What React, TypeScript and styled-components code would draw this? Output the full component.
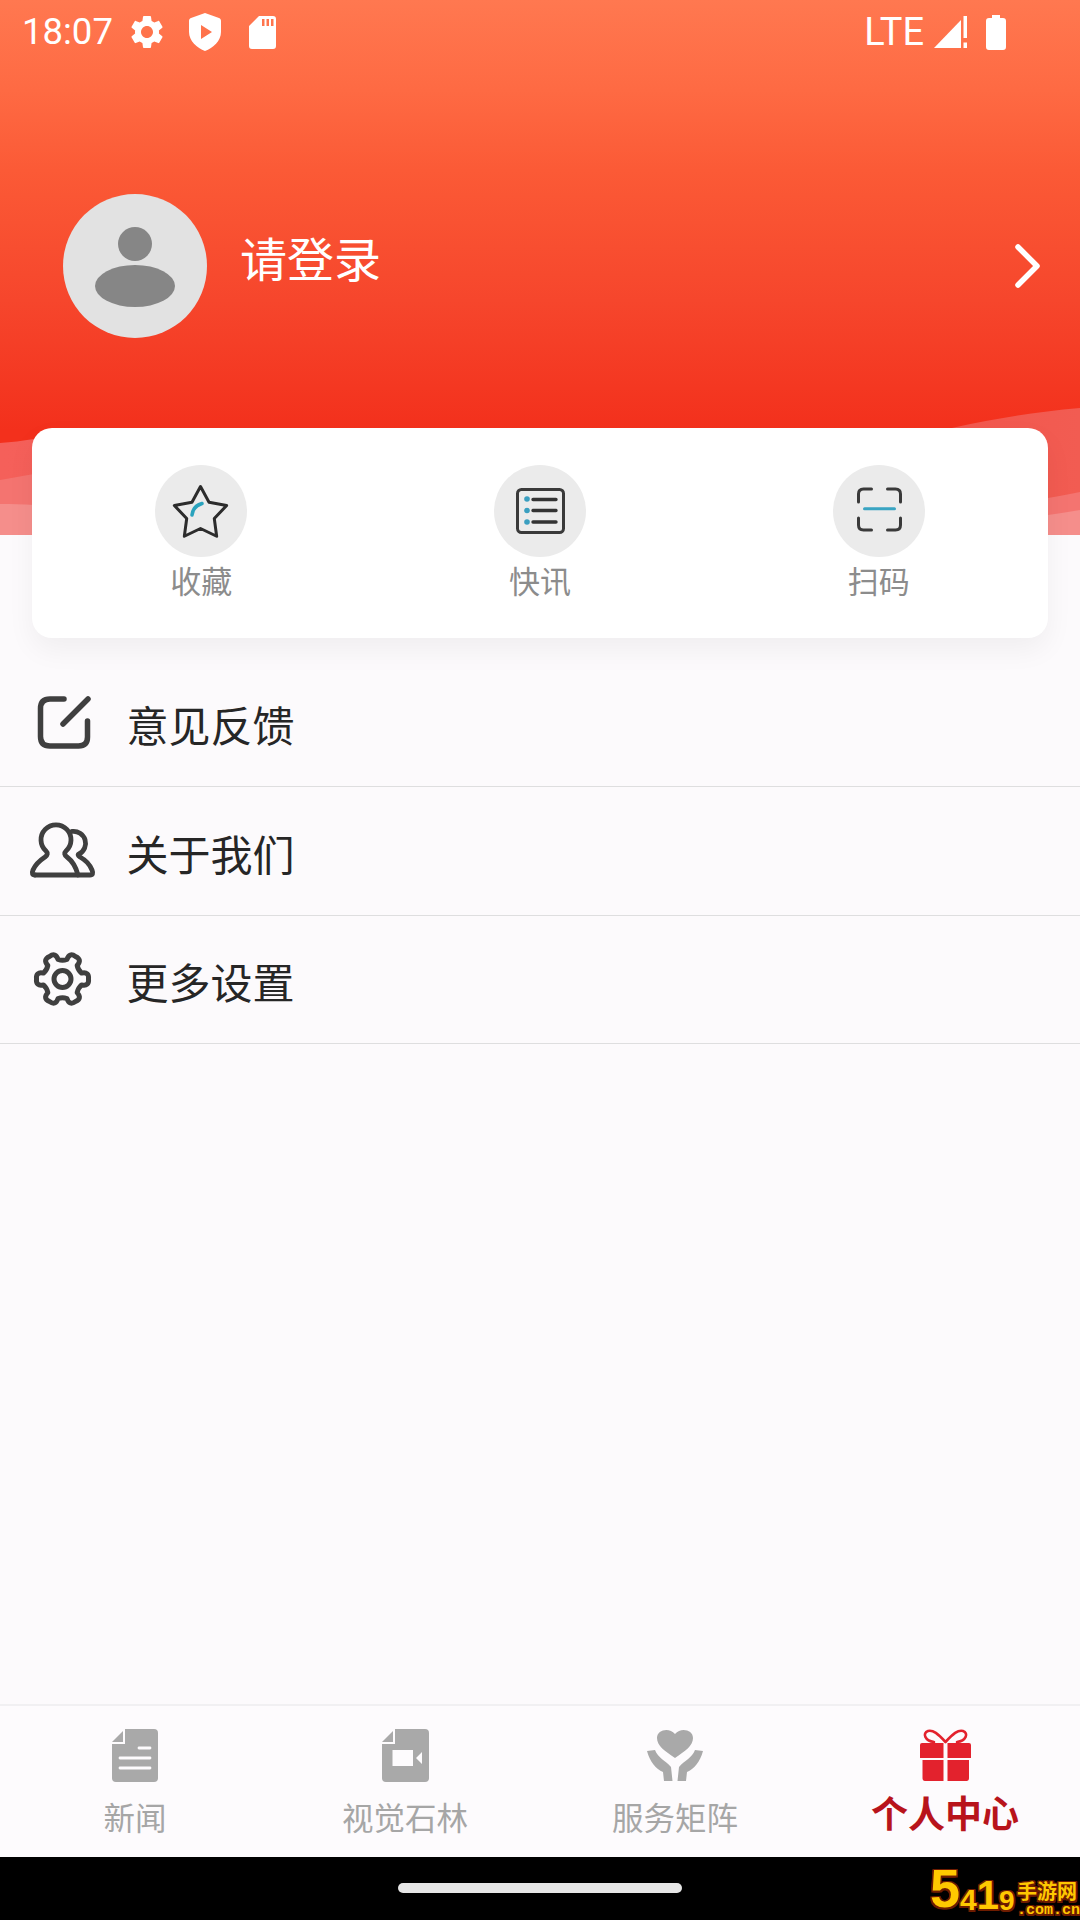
import React from "react";
import styled, { createGlobalStyle } from "styled-components";

const CJK = `"Noto Sans CJK SC", "Noto Sans", sans-serif`;

const Global = createGlobalStyle`
  html, body { margin: 0; padding: 0; background: #000; }
  * { box-sizing: border-box; }
`;

const Page = styled.div`
  position: relative;
  width: 1080px;
  height: 1920px;
  display: flex;
  flex-direction: column;
  background: #fcfafc;
  overflow: hidden;
  font-family: ${CJK};
`;

const Header = styled.header`
  position: relative;
  height: 535px;
  flex: none;
  background: linear-gradient(180deg, #ff7850 0, #fe6a43 90px, #fb5a36 170px, #f6462c 300px, #f3301c 430px);
`;

const WaveArt = styled.svg`
  position: absolute;
  left: 0;
  top: 400px;
  width: 1080px;
  height: 135px;
`;

const StatusBar = styled.div`
  position: relative;
  height: 54px;
  display: flex;
  align-items: center;
  padding: 10px 74px 0 22px;
  color: #fff;
  font-family: Roboto, sans-serif;
  font-size: 36.5px;
`;

const StatusTime = styled.span`
  line-height: 1;
  margin-right: 14.5px;
`;

const StatusIcon = styled.svg<{ $gap?: number }>`
  flex: none;
  display: block;
  margin-right: ${(p) => p.$gap ?? 0}px;
`;

const StatusSpacer = styled.div`
  flex: 1;
`;

const StatusLte = styled.span`
  line-height: 1;
  font-size: 38px;
  margin-right: 10px;
`;

const Profile = styled.div`
  position: relative;
  margin-top: 140px;
  display: flex;
  align-items: center;
  padding: 0 38px 0 63px;
`;

const Avatar = styled.svg`
  width: 144px;
  height: 144px;
  flex: none;
  display: block;
`;

const LoginText = styled.span`
  flex: 1;
  margin: -19px 0 0 33px;
  color: #fff;
  font-size: 47px;
  line-height: 60px;
`;

const Chevron = styled.svg`
  width: 28px;
  height: 46px;
  flex: none;
  display: block;
`;

const QuickCard = styled.section`
  position: relative;
  flex: none;
  height: 210px;
  margin: -107px 32px 0;
  display: grid;
  grid-template-columns: repeat(3, 1fr);
  background: #fff;
  border-radius: 20px;
  box-shadow: 0 12px 28px rgba(0, 0, 0, 0.05);
`;

const QuickItem = styled.div`
  display: flex;
  flex-direction: column;
  align-items: center;
  padding-top: 37px;
`;

const QuickDisc = styled.div`
  width: 92px;
  height: 92px;
  border-radius: 50%;
  background: #ebebeb;
  display: flex;
  align-items: center;
  justify-content: center;
`;

const QuickLabel = styled.span`
  margin-top: 3px;
  color: #8c8c8c;
  font-size: 31px;
  line-height: 40px;
`;

const Menu = styled.nav`
  flex: 1;
  margin-top: 21px;
`;

const MenuRow = styled.div`
  height: 128.4px;
  display: flex;
  align-items: center;
  border-bottom: 1.5px solid #dededf;
`;

const MenuIconSlot = styled.div`
  width: 126.5px;
  flex: none;
`;

const MenuIcon = styled.svg<{ $left: number }>`
  display: block;
  margin-left: ${(p) => p.$left}px;
`;

const MenuText = styled.span`
  margin-top: 3px;
  color: #262626;
  font-size: 42px;
  line-height: 56px;
`;

const TabBar = styled.nav`
  flex: none;
  height: 153px;
  display: grid;
  grid-template-columns: repeat(4, 1fr);
  background: #fdfbfd;
  border-top: 2px solid #f1f0f2;
`;

const Tab = styled.div`
  display: flex;
  flex-direction: column;
  align-items: center;
  padding-top: 22px;
`;

const TabIcon = styled.svg`
  width: 60px;
  height: 56px;
  display: block;
  flex: none;
`;

const TabLabel = styled.span<{ $active?: boolean }>`
  margin-top: ${(p) => (p.$active ? 6 : 10)}px;
  color: ${(p) => (p.$active ? "#b8141b" : "#a6a6a6")};
  font-size: ${(p) => (p.$active ? 37 : 31.5)}px;
  font-weight: ${(p) => (p.$active ? 700 : 400)};
  line-height: 44px;
  white-space: nowrap;
`;

const NavBar = styled.div`
  flex: none;
  height: 63px;
  background: #000;
  display: flex;
  justify-content: center;
  padding-top: 26px;
`;

const HomePill = styled.div`
  width: 284px;
  height: 10px;
  border-radius: 5px;
  background: #e6e6e6;
`;

const Watermark = styled.div`
  position: absolute;
  right: 0;
  bottom: 0;
  width: 150px;
  height: 55px;
  display: flex;
  align-items: flex-start;
  color: #ffc800;
  text-shadow: 1.5px 0 #6e1c00, -1.5px 0 #6e1c00, 0 1.5px #6e1c00, 0 -1.5px #6e1c00, 1.5px 1.5px #6e1c00,
    -1.5px -1.5px #6e1c00, 1.5px -1.5px #6e1c00, -1.5px 1.5px #6e1c00;
`;

const MarkDigits = styled.div`
  display: flex;
  align-items: flex-end;
  width: 87px;
  height: 50px;
  font-family: "Liberation Sans", sans-serif;
  font-weight: 700;
  line-height: 1;
`;

const MarkDigit = styled.span<{ $size: number }>`
  font-size: ${(p) => p.$size}px;
`;

const MarkWords = styled.div`
  display: flex;
  flex-direction: column;
  margin-top: 15px;
`;

const MarkName = styled.span`
  font-size: 20px;
  line-height: 22px;
  font-weight: 700;
  white-space: nowrap;
`;

const MarkDomain = styled.span`
  font-family: "Liberation Mono", monospace;
  font-size: 15px;
  line-height: 18px;
  font-weight: 700;
  white-space: nowrap;
`;

const gearPath = (cx: number, cy: number, ro: number, ri: number, n: number) => {
  const pt = (r: number, a: number) => `${(cx + r * Math.cos(a)).toFixed(2)} ${(cy + r * Math.sin(a)).toFixed(2)}`;
  const step = (Math.PI * 2) / n;
  let d = "";
  for (let i = 0; i < n; i++) {
    const a = i * step;
    const w = step * 0.26;
    d += `${i === 0 ? "M" : "L"}${pt(ri, a - w * 1.1)} Q${pt(ro * 1.07, a - w * 1.0)} ${pt(ro, a)} Q${pt(ro * 1.07, a + w * 1.0)} ${pt(ri, a + w * 1.1)} Q${pt(ri * 0.9, a + step / 2)} ${pt(ri, a + step - w * 1.1)} `;
  }
  return d + "Z";
};

const Waves = () => (
  <WaveArt viewBox="0 400 1080 135">
    <defs>
      <linearGradient id="w1" x1="0" y1="0" x2="1" y2="0">
        <stop offset="0" stopColor="#f5605a" />
        <stop offset="0.85" stopColor="#f2564c" />
        <stop offset="1" stopColor="#f25c52" />
      </linearGradient>
    </defs>
    <path d="M0 443 C12 442 22 441 34 439 C300 430 700 440 900 440 C950 428 1010 414 1080 408 V535 H0 Z" fill="url(#w1)" />
    <path d="M0 480 C12 478 22 476 34 474 C300 470 800 510 1048 498 C1060 496 1070 494 1080 492 V535 H0 Z" fill="#f47470" />
    <path d="M0 504 C12 504 22 504 34 505 C300 520 800 520 1048 515 C1060 513 1070 512 1080 510 V535 H0 Z" fill="#f58e8b" />
  </WaveArt>
);

const Status = () => (
  <StatusBar>
    <StatusTime>18:07</StatusTime>
    <StatusIcon width="40" height="40" viewBox="0 0 24 24" fill="#fff" $gap={22}>
      <path d="M19.14,12.94c0.04-0.3,0.06-0.61,0.06-0.94c0-0.32-0.02-0.64-0.07-0.94l2.03-1.58c0.18-0.14,0.23-0.41,0.12-0.61l-1.92-3.32c-0.12-0.22-0.37-0.29-0.59-0.22l-2.39,0.96c-0.5-0.38-1.03-0.7-1.62-0.94L14.4,2.81c-0.04-0.24-0.24-0.41-0.48-0.41h-3.84c-0.24,0-0.43,0.17-0.47,0.41L9.25,5.35C8.66,5.59,8.12,5.92,7.63,6.29L5.24,5.33c-0.22-0.08-0.47,0-0.59,0.22L2.74,8.87C2.62,9.08,2.66,9.34,2.86,9.48l2.03,1.58C4.84,11.36,4.8,11.69,4.8,12s0.02,0.64,0.07,0.94l-2.03,1.58c-0.18,0.14-0.23,0.41-0.12,0.61l1.92,3.32c0.12,0.22,0.37,0.29,0.59,0.22l2.39-0.96c0.5,0.38,1.03,0.7,1.62,0.94l0.36,2.54c0.05,0.24,0.24,0.41,0.48,0.41h3.84c0.24,0,0.44-0.17,0.47-0.41l0.36-2.54c0.59-0.24,1.13-0.56,1.62-0.94l2.39,0.96c0.22,0.08,0.47,0,0.59-0.22l1.92-3.32c0.12-0.22,0.07-0.47-0.12-0.61L19.14,12.94z M12,15.6c-1.98,0-3.6-1.62-3.6-3.6s1.62-3.6,3.6-3.6s3.6,1.62,3.6,3.6S13.98,15.6,12,15.6z" />
    </StatusIcon>
    <StatusIcon width="32" height="38" viewBox="0 0 32 38" $gap={28}>
      <path fillRule="evenodd" fill="#fff" d="M16 0 L30 5 C31.5 5.5 32 6.5 32 8 V19 C32 28 24 35 16 38 C8 35 0 28 0 19 V8 C0 6.5 0.5 5.5 2 5 Z M12 12 V26 L23 19 Z" />
    </StatusIcon>
    <StatusIcon width="27" height="33" viewBox="0 0 27 33">
      <path fillRule="evenodd" fill="#fff" d="M10 0 H24 C26 0 27 1 27 3 V30 C27 32 26 33 24 33 H3 C1 33 0 32 0 30 V10 Z M13 3 V10 H15.5 V3 Z M17.5 3 V10 H20 V3 Z M22 3 V10 H24.5 V3 Z" />
    </StatusIcon>
    <StatusSpacer />
    <StatusLte>LTE</StatusLte>
    <StatusIcon width="34" height="34" viewBox="0 0 34 34" $gap={18}>
      <path fill="#fff" d="M0 33 L27 5 V33 Z" />
      <path fill="#fff" d="M29.5 1 H33 V23 H29.5 Z M29.5 27.5 H33 V33 H29.5 Z" />
    </StatusIcon>
    <StatusIcon width="20" height="35" viewBox="0 0 20 35">
      <path fill="#fff" d="M6 0 H14 V3 H17 C19 3 20 4 20 6 V32 C20 34 19 35 17 35 H3 C1 35 0 34 0 32 V6 C0 4 1 3 3 3 H6 Z" />
    </StatusIcon>
  </StatusBar>
);

const star = (cx: number, cy: number, ro: number, ri: number) => {
  const p: string[] = [];
  for (let i = 0; i < 10; i++) {
    const r = i % 2 ? ri : ro;
    const a = -Math.PI / 2 + (i * Math.PI) / 5;
    p.push(`${(cx + r * Math.cos(a)).toFixed(2)},${(cy + r * Math.sin(a)).toFixed(2)}`);
  }
  return p.join(" ");
};

const StarIcon = () => (
  <svg width="92" height="92" viewBox="155 465 92 92">
    <polygon points={star(200.5, 514, 27.5, 14.5)} fill="none" stroke="#2c2c2c" strokeWidth="3" strokeLinejoin="round" />
    <path d="M192 515 Q193 506 202 503.5" fill="none" stroke="#2aa3bd" strokeWidth="3.5" strokeLinecap="round" />
  </svg>
);

const ListIcon = () => (
  <svg width="92" height="92" viewBox="494 465 92 92">
    <rect x="517.5" y="489.5" width="46" height="43" rx="4" fill="none" stroke="#3a3a3a" strokeWidth="3" />
    <g fill="#3a9fc0">
      <circle cx="527" cy="499" r="2.8" />
      <circle cx="527" cy="510.5" r="2.8" />
      <circle cx="527" cy="522" r="2.8" />
    </g>
    <path d="M533 499.5 H556 M533 510.5 H556 M533 522 H556" stroke="#333" strokeWidth="3.4" strokeLinecap="round" />
  </svg>
);

const ScanIcon = () => (
  <svg width="92" height="92" viewBox="833.5 465 92 92">
    <path d="M872 489 H864 Q859 489 859 494 V502 M888 489 H896 Q901 489 901 494 V502 M859 518 V525 Q859 530 864 530 H872 M901 518 V525 Q901 530 896 530 H888" fill="none" stroke="#3a3a3a" strokeWidth="3" strokeLinecap="round" />
    <path d="M865 508.8 H895" stroke="#39a4c2" strokeWidth="3" strokeLinecap="round" />
  </svg>
);

const EditIcon = () => (
  <MenuIcon $left={36} width="56" height="56" viewBox="36 695 56 56" fill="none" stroke="#3f3f3f" strokeWidth="5.5" strokeLinecap="round" strokeLinejoin="round">
    <path d="M64 699 H50 Q40.5 699 40.5 708.5 V736.5 Q40.5 746 50 746 H78.5 Q87.5 746 87.5 737 V721" />
    <path d="M63 724 L88 699" />
  </MenuIcon>
);

const UsersIcon = () => (
  <MenuIcon $left={28} width="68" height="58" viewBox="28 822 68 58" fill="none" stroke="#3f3f3f" strokeWidth="4.8" strokeLinecap="round" strokeLinejoin="round">
    <path d="M35 875 H90 Q94 875 92 870 Q89 862 80 857 Q77 855 79 854 A12 12 0 0 0 72 831.4" />
    <path d="M35 875 Q31 875 33 870 Q36 863 45 857 Q49 854 46 851 A15 15 0 1 1 66 851 Q63 854 67 857 Q75 863 78 875" />
  </MenuIcon>
);

const GearIcon = () => (
  <MenuIcon $left={30} width="66" height="66" viewBox="30 945 66 66" fill="none" stroke="#3f3f3f" strokeWidth="5" strokeLinejoin="round">
    <path d={gearPath(62.5, 978, 26, 20, 6)} />
    <circle cx="62.5" cy="978" r="8.5" />
  </MenuIcon>
);

const DocIcon = () => (
  <TabIcon viewBox="105 1727 60 56">
    <path fill="#a9a9a9" d="M125 1728 H154 Q158 1728 158 1732 V1777 Q158 1781 154 1781 H116 Q112 1781 112 1777 V1743 H125 Z" />
    <path fill="#a9a9a9" d="M112 1741 L123 1730 V1741 Z" />
    <path d="M139 1747 H150 M120 1757 H150 M120 1767 H150" stroke="#fdfbfd" strokeWidth="2.8" strokeLinecap="round" />
  </TabIcon>
);

const VideoIcon = () => (
  <TabIcon viewBox="375 1727 60 56">
    <path fill="#a9a9a9" d="M395 1728 H425 Q429 1728 429 1732 V1777 Q429 1781 425 1781 H386 Q382 1781 382 1777 V1743 H395 Z" />
    <path fill="#a9a9a9" d="M382 1741 L393 1730 V1741 Z" />
    <path fill="#fdfbfd" d="M392.5 1749 H413 V1765 H392.5 Z M416 1757 L422 1751 V1763 Z" />
  </TabIcon>
);

const CareIcon = () => (
  <TabIcon viewBox="645 1727 60 56">
    <path fill="#a9a9a9" d="M675 1757 C665 1750 657 1745 657 1737 C657 1729 669 1726 675 1733 C681 1726 693 1729 693 1737 C693 1745 685 1750 675 1757 Z" />
    <path fill="#a9a9a9" d="M647 1750 L655 1749 C658 1757 665 1759 671 1766 L672.5 1780 H664 L663 1771 C656 1768 650 1761 647 1750 Z" />
    <path fill="#a9a9a9" d="M703 1750 L695 1749 C692 1757 685 1759 679 1766 L677.5 1780 H686 L687 1771 C694 1768 700 1761 703 1750 Z" />
  </TabIcon>
);

const GiftIcon = () => (
  <TabIcon viewBox="915 1727 60 56">
    <path fill="#e3222d" d="M922 1742 H943.5 V1757 H920 V1744 Q920 1742 922 1742 Z M947.5 1742 H969 Q971 1742 971 1744 V1757 H947.5 Z" />
    <path fill="#e3222d" d="M922.5 1759 H943.5 V1780 H925 Q922.5 1780 922.5 1777 Z M947.5 1759 H969 V1777 Q969 1780 966.5 1780 H947.5 Z" />
    <path d="M945.5 1741 C938 1733 933 1728.5 928 1730 C922 1732 925 1740 934 1741 M945.5 1741 C953 1733 958 1728.5 963 1730 C969 1732 966 1740 957 1741" fill="none" stroke="#e3222d" strokeWidth="2.6" strokeLinecap="round" />
  </TabIcon>
);

export default function App() {
  return (
    <Page>
      <Global />
      <Header>
        <Waves />
        <Status />
        <Profile>
          <Avatar viewBox="63 194 144 144">
            <circle cx="135" cy="266" r="72" fill="#e2e2e2" />
            <circle cx="135" cy="244" r="17" fill="#868686" />
            <ellipse cx="135" cy="286" rx="40" ry="21" fill="#868686" />
          </Avatar>
          <LoginText>请登录</LoginText>
          <Chevron viewBox="0 0 28 46" fill="none" stroke="#fff" strokeWidth="5.5" strokeLinecap="round" strokeLinejoin="round">
            <path d="M4 4 L23 23 L4 42" />
          </Chevron>
        </Profile>
      </Header>
      <QuickCard>
        <QuickItem>
          <QuickDisc><StarIcon /></QuickDisc>
          <QuickLabel>收藏</QuickLabel>
        </QuickItem>
        <QuickItem>
          <QuickDisc><ListIcon /></QuickDisc>
          <QuickLabel>快讯</QuickLabel>
        </QuickItem>
        <QuickItem>
          <QuickDisc><ScanIcon /></QuickDisc>
          <QuickLabel>扫码</QuickLabel>
        </QuickItem>
      </QuickCard>
      <Menu>
        <MenuRow>
          <MenuIconSlot><EditIcon /></MenuIconSlot>
          <MenuText>意见反馈</MenuText>
        </MenuRow>
        <MenuRow>
          <MenuIconSlot><UsersIcon /></MenuIconSlot>
          <MenuText>关于我们</MenuText>
        </MenuRow>
        <MenuRow>
          <MenuIconSlot><GearIcon /></MenuIconSlot>
          <MenuText>更多设置</MenuText>
        </MenuRow>
      </Menu>
      <TabBar>
        <Tab>
          <DocIcon />
          <TabLabel>新闻</TabLabel>
        </Tab>
        <Tab>
          <VideoIcon />
          <TabLabel>视觉石林</TabLabel>
        </Tab>
        <Tab>
          <CareIcon />
          <TabLabel>服务矩阵</TabLabel>
        </Tab>
        <Tab>
          <GiftIcon />
          <TabLabel $active>个人中心</TabLabel>
        </Tab>
      </TabBar>
      <NavBar>
        <HomePill />
      </NavBar>
      <Watermark>
        <MarkDigits>
          <MarkDigit $size={54}>5</MarkDigit>
          <MarkDigit $size={30}>4</MarkDigit>
          <MarkDigit $size={40}>1</MarkDigit>
          <MarkDigit $size={28}>9</MarkDigit>
        </MarkDigits>
        <MarkWords>
          <MarkName>手游网</MarkName>
          <MarkDomain>.com.cn</MarkDomain>
        </MarkWords>
      </Watermark>
    </Page>
  );
}
